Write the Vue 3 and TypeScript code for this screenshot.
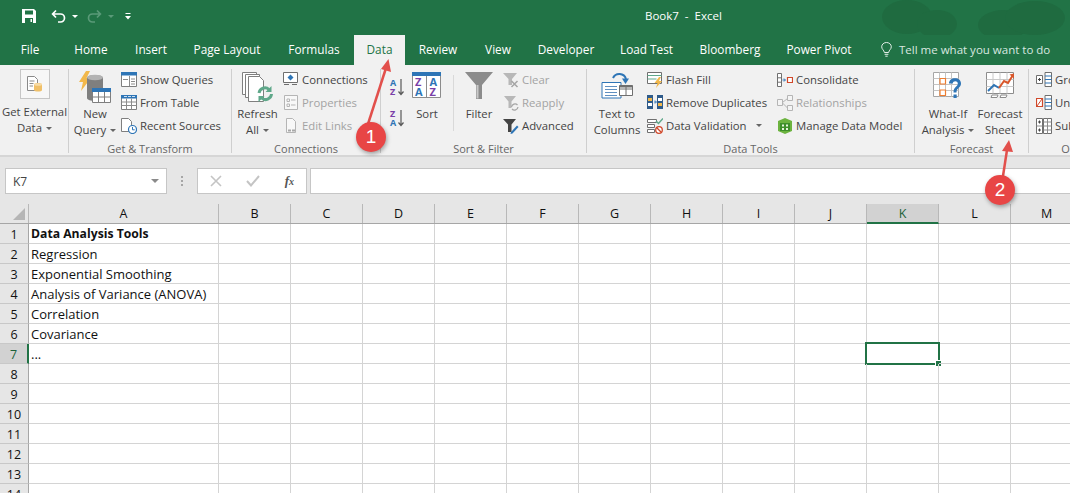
<script setup lang="ts">
const tabs: { name: string; width: number }[] = [
  { name: 'File', width: 60 },
  { name: 'Home', width: 62 },
  { name: 'Insert', width: 58 },
  { name: 'Page Layout', width: 94 },
  { name: 'Formulas', width: 80 },
  { name: 'Data', width: 51 },
  { name: 'Review', width: 66 },
  { name: 'View', width: 54 },
  { name: 'Developer', width: 82 },
  { name: 'Load Test', width: 79 },
  { name: 'Bloomberg', width: 88 },
  { name: 'Power Pivot', width: 90 },
]
const columns = ['A', 'B', 'C', 'D', 'E', 'F', 'G', 'H', 'I', 'J', 'K', 'L', 'M']
const cells: Record<number, string> = {
  1: 'Data Analysis Tools',
  2: 'Regression',
  3: 'Exponential Smoothing',
  4: 'Analysis of Variance (ANOVA)',
  5: 'Correlation',
  6: 'Covariance',
  7: '...',
}
const rows = Array.from({ length: 14 }, (_, i) => i + 1)
</script>

<template>
  <div class="app">
    <header class="titlebar">
      <svg class="clouds" width="200" height="65" viewBox="0 0 200 65">
        <g fill="#1f6b40">
          <ellipse cx="32" cy="17" rx="25" ry="17" />
          <ellipse cx="62" cy="24" rx="20" ry="14" />
          <ellipse cx="128" cy="25" rx="25" ry="15" />
          <ellipse cx="160" cy="18" rx="30" ry="17" />
        </g>
      </svg>
      <div class="qat">
        <svg class="save" width="16" height="16" viewBox="0 0 16 16">
          <path d="M1 1h12l2 2v12H1z" fill="#fff" />
          <path d="M4 2.5h8v4H4z" fill="#217346" />
          <path d="M4 10h8v5H4z" fill="#217346" />
          <path d="M9.5 11h1.5v3H9.5z" fill="#fff" />
        </svg>
        <svg class="undo" width="15" height="15" viewBox="0 0 15 15">
          <path d="M5 1.5 1.6 5 5 8.5M2 5h7.5a3.6 3.6 0 0 1 0 8H7" fill="none" stroke="#fff" stroke-width="1.7" />
        </svg>
        <i class="caret white" />
        <svg class="redo" width="15" height="15" viewBox="0 0 15 15">
          <path d="M10 1.5 13.4 5 10 8.5M13 5H5.5a3.6 3.6 0 0 0 0 8H8" fill="none" stroke="#5a9a78" stroke-width="1.7" />
        </svg>
        <i class="caret dim" />
        <svg class="custom" width="6" height="7" viewBox="0 0 6 7">
          <path d="M0.5 0h5v1h-5zM0 3h6L3 6.5z" fill="#fff" />
        </svg>
      </div>
      <div class="doc-title">Book7 &nbsp;-&nbsp; Excel</div>
    </header>

    <nav class="tabs">
      <div
        v-for="t in tabs"
        :key="t.name"
        class="tab"
        :class="{ active: t.name === 'Data' }"
        :style="{ width: t.width + 'px' }"
      >{{ t.name }}</div>
      <div class="tell">
        <svg width="11" height="15" viewBox="0 0 11 15">
          <path d="M3.4 10.5C3 8 .7 7.300.7 4.800a4.800 4.300 0 0 1 9.600 0c0 2.500-2.300 3.200-2.700 5.700zM3.600 12.300h3.800M4.300 14.200h2.400" fill="none" stroke="#e4efe9" stroke-width="1" />
        </svg>
        <span>Tell me what you want to do</span>
      </div>
    </nav>

    <section class="ribbon">
      <div class="group g-ext">
        <div class="body">
          <div class="big ext">
            <div class="ext-box">
              <svg width="16" height="16" viewBox="0 0 16 16">
                <path d="M.5.5h7l3 3v11H.5z" fill="#fff" stroke="#8a8a8a" />
                <path d="M2.500 5h5M2.500 7.500h4M2.500 10h3.500" stroke="#8a8a8a" />
                <path d="M7 8.500c0-2 8-2 8 0v5.500c0 2-8 2-8 0z" fill="#f0c069" />
                <ellipse cx="11" cy="8.500" rx="4" ry="1.300" fill="#f7dca8" />
              </svg>
            </div>
            <span>Get External</span>
            <span>Data <i class="caret" /></span>
          </div>
        </div>
      </div>

      <div class="group g-trans">
        <div class="body">
          <div class="big w-new">
            <svg class="ico" width="33" height="33" viewBox="0 0 33 33">
              <path d="M7 0 0 11h4L2 20 12 7H7.500L11 0z" fill="#f2b84b" />
              <path d="M8 7c0-4 16-4 16 0v20c0 4-16 4-16 0z" fill="#7f7f7f" />
              <ellipse cx="16" cy="6.500" rx="8" ry="2.800" fill="#b3b3b3" />
              <path d="M13.500 17.500h18v14h-18z" fill="#fff" stroke="#7f7f7f" />
              <path d="M13 17h19v4H13z" fill="#2e75b6" />
              <path d="M13.500 26h18M19.500 21v10M25.500 21v10" stroke="#7f7f7f" />
            </svg>
            <span>New</span>
            <span>Query <i class="caret" /></span>
          </div>
          <div class="smalls">
            <div class="sm">
              <svg width="16" height="15" viewBox="0 0 16 15">
                <path d="M.5.500h15v14H.5z" fill="#fff" stroke="#7f7f7f" />
                <path d="M0 0h16v3.500H0z" fill="#2e75b6" />
                <path d="M8.500 4v10M10 7h4M10 9.500h4M10 12h4M2 7.500h5" stroke="#8c8c8c" />
              </svg>
              <span>Show Queries</span>
            </div>
            <div class="sm">
              <svg width="16" height="15" viewBox="0 0 16 15">
                <path d="M.5.500h15v14H.5z" fill="#fff" stroke="#7f7f7f" />
                <path d="M0 0h16v3.500H0z" fill="#2e75b6" />
                <path d="M3 1.500h3M7 1.500h3M11 1.500h3" stroke="#cfe0f0" />
                <path d="M.5 7h15M.5 10.500h15M5.500 3.500v11M10.500 3.500v11" stroke="#8c8c8c" />
              </svg>
              <span>From Table</span>
            </div>
            <div class="sm">
              <svg width="16" height="16" viewBox="0 0 16 16">
                <path d="M.5.500h7l3 3v10H.5z" fill="#fff" stroke="#7f7f7f" />
                <circle cx="11.500" cy="11.500" r="4" fill="#fff" stroke="#2e75b6" stroke-width="1.200" />
                <path d="M11.500 9v2.800h2.200" fill="none" stroke="#2e75b6" />
              </svg>
              <span>Recent Sources</span>
            </div>
          </div>
        </div>
        <div class="label">Get &amp; Transform</div>
      </div>

      <div class="group g-conn">
        <div class="body">
          <div class="big w-refresh">
            <svg class="ico" width="31" height="33" viewBox="0 0 31 33">
              <path d="M.5 1.500h14v22H.5z" fill="#fff" stroke="#7f7f7f" />
              <path d="M3.500 3.500h14v23h-14z" fill="#fff" stroke="#7f7f7f" />
              <path d="M6.500 5.500h11l4 4v21h-15z" fill="#fff" stroke="#7f7f7f" />
              <path d="M17 22a6 6 0 0 1 10-3.500M29.500 23a6 6 0 0 1-10 4" fill="none" stroke="#5fa88a" stroke-width="3" />
              <path d="M29.500 15v6h-6zM16.500 31v-6h6z" fill="#5fa88a" />
            </svg>
            <span>Refresh</span>
            <span>All <i class="caret" /></span>
          </div>
          <div class="smalls">
            <div class="sm">
              <svg width="16" height="15" viewBox="0 0 16 15">
                <path d="M.5.500h14v10H.5z" fill="#fff" stroke="#6f6f6f" />
                <path d="M7.500 2.500 10.500 5.500 7.500 8.500 4.500 5.500z" fill="#2e75b6" />
                <path d="M1 12.500h5M9 12.500h5" stroke="#6f6f6f" />
              </svg>
              <span>Connections</span>
            </div>
            <div class="sm off">
              <svg width="16" height="15" viewBox="0 0 16 15">
                <path d="M1.500.500h13v14h-13z" fill="#f8f8f8" stroke="#b5b5b5" />
                <path d="M4 4h2.500v2.500H4zM4 9h2.500v2.500H4z" fill="none" stroke="#b5b5b5" />
                <path d="M8 5h4.500M8 10h4.500" stroke="#b5b5b5" />
              </svg>
              <span>Properties</span>
            </div>
            <div class="sm off">
              <svg width="16" height="16" viewBox="0 0 16 16">
                <path d="M3.500.500h6l3 3v11h-9z" fill="#f8f8f8" stroke="#b5b5b5" />
                <path d="M5 12.500h3M9 12.500h3" stroke="#a8a8a8" stroke-width="2" />
              </svg>
              <span>Edit Links</span>
            </div>
          </div>
        </div>
        <div class="label">Connections</div>
      </div>

      <div class="group g-sort">
        <div class="body">
          <div class="az">
            <svg width="15" height="18" viewBox="0 0 15 18">
              <text x="0" y="8" class="az-a">A</text>
              <text x="0" y="17" class="az-z">Z</text>
              <path d="M11 1v15M8.500 13.500 11 16.500l2.500-3" fill="none" stroke="#595959" stroke-width="1.200" />
            </svg>
            <svg width="15" height="18" viewBox="0 0 15 18">
              <text x="0" y="8" class="az-z">Z</text>
              <text x="0" y="17" class="az-a">A</text>
              <path d="M11 1v15M8.500 13.500 11 16.500l2.500-3" fill="none" stroke="#595959" stroke-width="1.200" />
            </svg>
          </div>
          <div class="big w-sort">
            <svg class="ico" width="30" height="33" viewBox="0 0 30 33">
              <path d="M.5 1.500h28v25H.5z" fill="#fff" stroke="#8c8c8c" />
              <path d="M0 1h29v4H0z" fill="#2e75b6" />
              <path d="M14.500 5v21" stroke="#8c8c8c" />
              <text x="3" y="15" class="s-z">Z</text>
              <text x="3" y="25" class="s-a">A</text>
              <text x="17.500" y="15" class="s-a">A</text>
              <text x="17.500" y="25" class="s-z">Z</text>
            </svg>
            <span>Sort</span>
          </div>
          <div class="vsep" />
          <div class="big w-filter">
            <svg class="ico" width="28" height="33" viewBox="0 0 28 33">
              <path d="M0 1h28L17 14v14h-6V14z" fill="#8c8c8c" />
              <path d="M11.500 14h2v13.500h-2z" fill="#c9c9c9" />
            </svg>
            <span>Filter</span>
          </div>
          <div class="smalls">
            <div class="sm off">
              <svg width="16" height="16" viewBox="0 0 16 16">
                <path d="M0 1h14L9 7v6H5.500V7z" fill="#b8b8b8" />
                <path d="M8.500 9l6 6M14.500 9l-6 6" stroke="#a5a5a5" stroke-width="1.500" />
              </svg>
              <span>Clear</span>
            </div>
            <div class="sm off">
              <svg width="16" height="16" viewBox="0 0 16 16">
                <path d="M1 1h12L8.500 6.500V13H5.500V6.500z" fill="#b8b8b8" />
                <path d="M8.500 12a3.500 3.500 0 0 1 6-2M15 12a3.500 3.500 0 0 1-6 2" fill="none" stroke="#a5a5a5" stroke-width="1.200" />
              </svg>
              <span>Reapply</span>
            </div>
            <div class="sm">
              <svg width="16" height="16" viewBox="0 0 16 16">
                <path d="M0 1h13L8.500 6.500V14H5V6.500z" fill="#444" />
                <path d="M8 14l-.5 2 2-.5 6-6.500-1.500-1.500z" fill="#2e75b6" />
              </svg>
              <span>Advanced</span>
            </div>
          </div>
        </div>
        <div class="label">Sort &amp; Filter</div>
      </div>

      <div class="group g-tools">
        <div class="body">
          <div class="big w-text">
            <svg class="ico" width="32" height="33" viewBox="0 0 32 33">
              <path d="M12 7a7 7 0 0 1 13 1" fill="none" stroke="#2e75b6" stroke-width="2" />
              <path d="M21 7.500h7L24.500 13z" fill="#2e75b6" />
              <path d="M1 11.500h14l5 0v15.500H1z" fill="#fff" stroke="#2e75b6" />
              <path d="M4 15.500h12M4 18.500h12M4 21.500h12M4 24.500h12" stroke="#5f8fc0" />
              <path d="M18.500 14.500h13v10h-13z" fill="#fff" stroke="#6f6f6f" />
              <path d="M18.500 18h13M25 14.500v10" stroke="#6f6f6f" />
              <path d="M18.500 14.500h13v2h-13z" fill="#6f6f6f" />
            </svg>
            <span>Text to</span>
            <span>Columns</span>
          </div>
          <div class="smalls w-tools1">
            <div class="sm">
              <svg width="16" height="16" viewBox="0 0 16 16">
                <path d="M.5.500h14v11H.5z" fill="#fff" stroke="#6f6f6f" />
                <path d="M.5 3.500h14M.5 7h9" stroke="#5fa88a" />
                <path d="M12 5 7.500 11h3L9 16l6-7h-3l2-4z" fill="#f2b84b" />
              </svg>
              <span>Flash Fill</span>
            </div>
            <div class="sm">
              <svg width="16" height="15" viewBox="0 0 16 15">
                <path d="M0 0h6v14H0zM10 0h6v14h-6z" fill="#2f5b8a" />
                <path d="M1 3h4v3H1zM11 8h4v3h-4z" fill="#f2b84b" />
                <path d="M1 8h4v3H1zM11 3h4v3h-4z" fill="#fff" />
                <path d="M7 7h2M8 5.500 9.500 7 8 8.500" fill="none" stroke="#2e75b6" />
              </svg>
              <span>Remove Duplicates</span>
            </div>
            <div class="sm">
              <svg width="16" height="16" viewBox="0 0 16 16">
                <path d="M.5 1.500h9v3h-9zM.5 6.500h7v3h-7zM.5 11.500h7v3h-7z" fill="#fff" stroke="#6f6f6f" />
                <path d="M9 3l2.500 2.500L16 .5" fill="none" stroke="#5fa88a" stroke-width="1.500" />
                <circle cx="12" cy="12" r="3.300" fill="#fff" stroke="#d0482a" stroke-width="1.300" />
                <path d="M9.800 9.800l4.400 4.400" stroke="#d0482a" stroke-width="1.300" />
              </svg>
              <span>Data Validation</span>
              <i class="caret dv" />
            </div>
          </div>
          <div class="smalls">
            <div class="sm">
              <svg width="16" height="14" viewBox="0 0 16 14">
                <path d="M.5.500h4v13h-4zM.5 4.800h4M.5 9.200h4" fill="#fff" stroke="#6f6f6f" />
                <path d="M5.500 7H8M7 5.500 8.500 7 7 8.500" fill="none" stroke="#2e75b6" />
                <path d="M10.500 4.500h5v5h-5z" fill="#fff" stroke="#d0482a" stroke-width="1.200" />
              </svg>
              <span>Consolidate</span>
            </div>
            <div class="sm off">
              <svg width="16" height="16" viewBox="0 0 16 16">
                <path d="M.5 4.500h5v6h-5zM10.500.500h5v5h-5zM10.500 10.500h5v5h-5zM5.500 7.500l5-4M5.500 8l5 5" fill="#f4f4f4" stroke="#b5b5b5" />
              </svg>
              <span>Relationships</span>
            </div>
            <div class="sm">
              <svg width="16" height="16" viewBox="0 0 16 16">
                <path d="M1 3 8 0l7 3v10l-7 3-7-3z" fill="#6cb33f" />
                <path d="M3 5h10v8H3z" fill="#3f8f2a" />
                <path d="M5 6.500h2v2H5zM9 6.500h2v2H9zM5 10h2v2H5zM9 10h2v2H9z" fill="#e8f4dc" />
              </svg>
              <span>Manage Data Model</span>
            </div>
          </div>
        </div>
        <div class="label">Data Tools</div>
      </div>

      <div class="group g-fore">
        <div class="body">
          <div class="big w-whatif">
            <svg class="ico" width="30" height="33" viewBox="0 0 30 33">
              <path d="M.5 1.500h25v24H.5z" fill="#fff" stroke="#a6a6a6" />
              <path d="M6.500 1.500v24M12.500 1.500v24M18.500 1.500v24M.5 7.500h25M.5 13.500h25M.5 19.500h25" stroke="#c4c4c4" />
              <path d="M7 7.500h5.500v5.500H7zM7 19h5.500v5.500H7z" fill="#fff" stroke="#ed7d31" stroke-width="1.200" />
              <path d="M16 12.500c0-7 12-7 12 0 0 4.500-4.500 4-4.500 9h-3c0-6 4.300-5.500 4.300-9 0-3-5-3-5 0z" fill="#2e75b6" />
              <path d="M20.500 23.500h3.200v3.500h-3.200z" fill="#2e75b6" />
            </svg>
            <span>What-If</span>
            <span>Analysis <i class="caret" /></span>
          </div>
          <div class="big w-fsheet">
            <svg class="ico" width="29" height="33" viewBox="0 0 29 33">
              <path d="M.5 1.500h27v21H.5z" fill="#fff" stroke="#8c8c8c" />
              <path d="M7 1.500v21M14 1.500v21M21 1.500v21M.5 8.500h27M.5 15.500h27" stroke="#c9c9c9" />
              <path d="M2 20l6-6 5 3" fill="none" stroke="#2e75b6" stroke-width="2" />
              <path d="M13 17l5-7 4 2 5-8" fill="none" stroke="#d9572b" stroke-width="2" />
              <path d="M23.500 3.500 28 2.500v5z" fill="#d9572b" />
              <path d="M6 24h6l-1 2.500H5zM15 24h6l-1 2.500h-6z" fill="#fff" stroke="#8c8c8c" />
            </svg>
            <span>Forecast</span>
            <span>Sheet</span>
          </div>
        </div>
        <div class="label">Forecast</div>
      </div>

      <div class="group g-out">
        <div class="body">
          <div class="smalls">
            <div class="sm">
              <svg width="16" height="15" viewBox="0 0 16 15">
                <path d="M.5 3.500h6v8h-6zM9 .5h6.500v14H9z" fill="#fff" stroke="#6f6f6f" />
                <path d="M2 7.500h3M3.500 6v3" stroke="#444" />
                <path d="M9 4h6.500M9 7.500h6.500M9 11h6.500" stroke="#2e75b6" />
              </svg>
              <span>Group</span>
            </div>
            <div class="sm">
              <svg width="16" height="15" viewBox="0 0 16 15">
                <path d="M.5 3.500h6v8h-6z" fill="#fff" stroke="#d0482a" stroke-width="1.200" />
                <path d="M1 11l5-7" stroke="#d0482a" />
                <path d="M9 .5h6.500v14H9z" fill="#fff" stroke="#6f6f6f" />
                <path d="M9 4h6.500M9 7.500h6.500M9 11h6.500" stroke="#2e75b6" />
              </svg>
              <span>Ungroup</span>
            </div>
            <div class="sm">
              <svg width="16" height="16" viewBox="0 0 16 16">
                <path d="M.5.500h6v15h-6zM7.500.500h8v15h-8z" fill="#fff" stroke="#6f6f6f" />
                <path d="M.5 8h6M7.500 4h8M7.500 8h8M7.500 12h8M11.500.500v15" stroke="#8c8c8c" />
                <path d="M2 4h3M3.500 2.500v3M2 12h3M3.500 10.500v3" stroke="#444" />
              </svg>
              <span>Subtotal</span>
            </div>
          </div>
        </div>
        <div class="label">Outline</div>
      </div>
    </section>

    <section class="formula">
      <div class="namebox">
        <span>K7</span>
        <i class="caret name" />
      </div>
      <div class="dots"><b /><b /><b /></div>
      <div class="fx">
        <svg width="12" height="12" viewBox="0 0 12 12">
          <path d="M1 1l10 10M11 1 1 11" stroke="#c4c4c4" stroke-width="1.600" />
        </svg>
        <svg width="14" height="12" viewBox="0 0 14 12">
          <path d="M1 6l4 4.500L13 1" fill="none" stroke="#c4c4c4" stroke-width="2" />
        </svg>
        <em>f<small>x</small></em>
      </div>
      <div class="input" />
    </section>

    <section class="sheet">
      <div class="hrow">
        <div class="corner"><i /></div>
        <div
          v-for="c in columns"
          :key="c"
          class="chead"
          :class="{ sel: c === 'K', wide: c === 'A' }"
        >{{ c }}</div>
      </div>
      <div v-for="r in rows" :key="r" class="row">
        <div class="rhead" :class="{ sel: r === 7 }">{{ r }}</div>
        <div
          v-for="c in columns"
          :key="c"
          class="cell"
          :class="{ wide: c === 'A', bold: r === 1 && c === 'A', current: r === 7 && c === 'K' }"
        >{{ c === 'A' ? cells[r] : '' }}</div>
      </div>
    </section>

    <svg class="arrows" width="1070" height="493" viewBox="0 0 1070 493">
      <path d="M368 124 386 68" stroke="#e2504c" stroke-width="2.500" fill="none" />
      <path d="M388.500 59 391 72 381 69z" fill="#e2504c" />
      <path d="M1003 176 1007 150" stroke="#e2504c" stroke-width="2.500" fill="none" />
      <path d="M1009 140 1013 152 1002 151z" fill="#e2504c" />
    </svg>
    <div class="badge one">1</div>
    <div class="badge two">2</div>
  </div>
</template>

<style scoped>
.app {
  position: relative;
  width: 1070px;
  height: 493px;
  overflow: hidden;
  background: #fff;
  font-family: "Open Sans", "Noto Sans", sans-serif;
  font-size: 11.35px;
  color: #444;
}
.titlebar {
  position: relative;
  height: 35px;
  display: flex;
  align-items: center;
  background: #217346;
  color: #fff;
}
.clouds {
  position: absolute;
  left: 875px;
  top: 0;
}
.qat {
  position: relative;
  display: flex;
  align-items: center;
  padding-left: 21px;
  width: 625px;
  box-sizing: border-box;
}
.save { margin-right: 14px; margin-top: -3px; }
.undo { margin-right: 5px; margin-top: -3px; }
.redo { margin: -3px 5px 0 9px; }
.custom { margin-left: 11px; margin-top: -3px; }
.doc-title {
  position: relative;
  margin-left: 20px;
  margin-top: -4px;
  font-size: 11.5px;
  white-space: nowrap;
}
.caret {
  display: inline-block;
  width: 0;
  height: 0;
  margin-left: 1px;
  vertical-align: 2px;
  border-left: 3px solid transparent;
  border-right: 3px solid transparent;
  border-top: 3px solid #666;
}
.caret.white { border-top-color: #fff; margin-top: -2px; }
.caret.dim { border-top-color: #5a9a78; margin-top: -2px; }
.caret.dv { margin-left: 6px; }
.caret.name { border-left-width: 4px; border-right-width: 4px; border-top: 4px solid #8a8a8a; }

.tabs {
  position: relative;
  height: 30px;
  display: flex;
  background: #217346;
  color: #fff;
  font-size: 11.8px;
}
.tab {
  display: flex;
  align-items: center;
  justify-content: center;
  flex: none;
  padding-bottom: 2px;
  white-space: nowrap;
}
.tab.active {
  background: #f1f1f1;
  color: #217346;
}
.tell {
  display: flex;
  align-items: center;
  gap: 7px;
  margin-left: 17px;
  padding-bottom: 2px;
  font-size: 11.5px;
  color: #d9e8e0;
  white-space: nowrap;
}

.ribbon {
  display: flex;
  height: 92px;
  box-sizing: border-box;
  background: #f1f1f1;
  border-bottom: 2px solid #d6d6d6;
  overflow: hidden;
}
.group {
  flex: none;
  display: flex;
  flex-direction: column;
  height: 84px;
  margin-top: 4px;
  border-right: 1px solid #cfcfcf;
  box-sizing: border-box;
}
.g-ext { width: 69px; }
.g-trans { width: 163px; }
.g-conn { width: 149px; }
.g-sort { width: 206px; }
.g-tools { width: 328px; }
.g-fore { width: 114px; }
.g-out { width: 60px; border-right: 0; }
.body {
  display: flex;
  flex: none;
  height: 73px;
  margin-top: -1px;
}
.label {
  flex: none;
  height: 15px;
  line-height: 15px;
  text-align: center;
  font-size: 11px;
  color: #666;
  white-space: nowrap;
}
.g-out .label { width: 102px; }
.big {
  flex: none;
  display: flex;
  flex-direction: column;
  align-items: center;
  line-height: 16px;
  white-space: nowrap;
}
.ico { flex: none; margin: 3px 0 2px; }
.ext { width: 69px; }
.ext-box {
  width: 28px;
  height: 28px;
  margin: 1px 0 5px;
  display: flex;
  align-items: center;
  justify-content: center;
  background: #f7f7f7;
  border: 1px solid #c6c6c6;
}
.w-new { width: 52px; }
.w-refresh { width: 51px; }
.w-sort { width: 44px; }
.w-filter { width: 44px; margin-right: 2px; }
.w-text { width: 60px; }
.w-whatif { width: 64px; margin-left: 1px; }
.w-fsheet { width: 40px; }
.smalls {
  display: flex;
  flex-direction: column;
}
.sm {
  height: 23px;
  display: flex;
  align-items: center;
  gap: 3px;
  white-space: nowrap;
}
.sm svg { flex: none; }
.sm.off { color: #a3a3a3; }
.w-tools1 { width: 130px; }
.g-out .smalls { margin-left: 7px; }
.az {
  flex: none;
  box-sizing: border-box;
  display: flex;
  flex-direction: column;
  gap: 13px;
  width: 24px;
  padding: 10px 0 0 9px;
}
.az svg { flex: none; overflow: visible; }
.az-a { font: 700 9px "Open Sans", sans-serif; fill: #2e75b6; }
.az-z { font: 700 9px "Open Sans", sans-serif; fill: #7a3fa8; }
.s-a { font: 700 11px "Open Sans", sans-serif; fill: #2e75b6; }
.s-z { font: 700 11px "Open Sans", sans-serif; fill: #7a3fa8; }
.vsep {
  flex: none;
  width: 1px;
  height: 56px;
  margin: 7px 3px 0 4px;
  background: #d9d9d9;
}

.formula {
  height: 47px;
  box-sizing: border-box;
  padding: 11px 0 10px 5px;
  display: flex;
  background: #e6e6e6;
}
.namebox {
  flex: none;
  width: 162px;
  box-sizing: border-box;
  display: flex;
  align-items: center;
  justify-content: space-between;
  padding: 0 7px;
  background: #fff;
  border: 1px solid #c6c6c6;
  font-size: 12px;
  color: #444;
}
.dots {
  flex: none;
  width: 30px;
  display: flex;
  flex-direction: column;
  align-items: center;
  justify-content: center;
  gap: 2px;
}
.dots b {
  width: 2px;
  height: 2px;
  background: #a6a6a6;
}
.fx {
  flex: none;
  width: 110px;
  box-sizing: border-box;
  display: flex;
  align-items: center;
  padding: 0 12px;
  justify-content: space-between;
  background: #fff;
  border: 1px solid #c6c6c6;
}
.fx em {
  font: italic 700 13px "Liberation Serif", serif;
  color: #555;
}
.fx small { font-size: 10px; }
.input {
  flex: 1;
  margin-left: 3px;
  background: #fff;
  border: 1px solid #c6c6c6;
  border-right: 0;
}

.sheet {
  overflow: hidden;
  font-size: 12.500px;
  color: #111;
}
.hrow,
.row {
  display: flex;
  width: 1100px;
}
.hrow {
  height: 20px;
  box-sizing: border-box;
  background: #e6e6e6;
  border-bottom: 1px solid #a6a6a6;
}
.corner {
  flex: none;
  position: relative;
  width: 29px;
  box-sizing: border-box;
  border-right: 1px solid #b8b8b8;
}
.corner i {
  position: absolute;
  right: 3px;
  bottom: 3px;
  border-left: 12px solid transparent;
  border-bottom: 12px solid #b5b5b5;
}
.chead {
  flex: none;
  width: 72px;
  box-sizing: border-box;
  text-align: center;
  line-height: 19px;
  border-right: 1px solid #b8b8b8;
}
.chead.wide,
.cell.wide { width: 190px; }
.chead.sel {
  height: 20px;
  background: #d2d2d2;
  border-bottom: 2px solid #217346;
  color: #1c6239;
}
.row {
  height: 20px;
}
.rhead {
  flex: none;
  width: 29px;
  box-sizing: border-box;
  text-align: center;
  line-height: 21px;
  background: #e6e6e6;
  border-right: 1px solid #a6a6a6;
  border-bottom: 1px solid #c8c8c8;
}
.rhead.sel {
  background: #d2d2d2;
  border-right: 2px solid #217346;
  color: #1c6239;
}
.cell {
  flex: none;
  position: relative;
  width: 72px;
  box-sizing: border-box;
  padding-left: 2px;
  font-size: 13px;
  line-height: 20px;
  white-space: nowrap;
  border-right: 1px solid #d4d4d4;
  border-bottom: 1px solid #d4d4d4;
}
.cell.bold { font-weight: 700; font-size: 12.200px; }
.cell.current::before {
  content: '';
  position: absolute;
  top: -2px;
  left: -2px;
  right: -2px;
  bottom: -2px;
  border: 2px solid #217346;
}
.cell.current::after {
  content: '';
  position: absolute;
  right: -4px;
  bottom: -4px;
  width: 5px;
  height: 5px;
  background: #217346;
  border: 1px solid #fff;
}

.arrows {
  position: absolute;
  left: 0;
  top: 0;
  pointer-events: none;
}
.badge {
  position: absolute;
  width: 30px;
  height: 30px;
  display: flex;
  align-items: center;
  justify-content: center;
  border-radius: 50%;
  background: #e84545;
  color: #fff;
  font-family: "Liberation Sans", sans-serif;
  font-size: 19px;
  box-shadow: 1px 2px 4px rgba(0, 0, 0, 0.35);
}
.badge.one { left: 356px; top: 122px; }
.badge.two { left: 985px; top: 175px; }
</style>
